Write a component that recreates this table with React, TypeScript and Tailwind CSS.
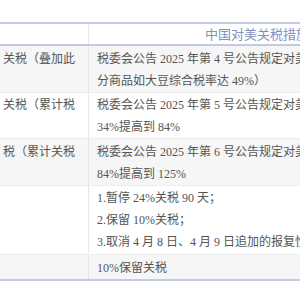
const font = {
  fontFamily: '"Liberation Serif", "Noto Sans CJK SC", serif',
};

type Row = { label: string; lines: string[]; gray: boolean; extra?: boolean };

const rows: Row[] = [
  {
    label: "关税（叠加此",
    lines: ["税委会公告 2025 年第 4 号公告规定对美国", "分商品如大豆综合税率达 49%）"],
    gray: true,
  },
  {
    label: "关税（累计税",
    lines: ["税委会公告 2025 年第 5 号公告规定对美国", "34%提高到 84%"],
    gray: false,
  },
  {
    label: "税（累计关税",
    lines: ["税委会公告 2025 年第 6 号公告规定对美国", "84%提高到 125%"],
    gray: true,
  },
  {
    label: "",
    lines: [
      "1.暂停 24%关税 90 天；",
      "2.保留 10%关税；",
      "3.取消 4 月 8 日、4 月 9 日追加的报复性关税",
    ],
    gray: false,
    extra: true,
  },
  { label: "", lines: ["10%保留关税"], gray: true },
];

export default function App() {
  return (
    <div className="w-[300px] h-[300px] bg-white overflow-hidden" style={font}>
      <div className="mt-[22px] border-t-2 border-b-2 border-[#c3cbe0] text-[12px] text-[#555]">
        <div className="flex h-[22px] border-b-2 border-[#c3cbe0] bg-white">
          <div className="w-[89px] shrink-0 border-r border-[#e6e6e6]" />
          <div className="flex-1 pl-[116px] leading-[22px] whitespace-nowrap overflow-hidden text-[#7f90c2] text-[13px]">
            中国对美关税措施一览
          </div>
        </div>
        {rows.map((r, i) => (
          <div
            key={i}
            className={`flex ${i > 0 ? "border-t border-[#ececec]" : ""} ${
              r.gray ? "bg-[#f6f6f6]" : "bg-white"
            } ${r.extra ? "pb-[1px]" : ""}`}
          >
            <div className="w-[89px] shrink-0 border-r border-[#e6e6e6] pl-[3px] pt-[1.5px] leading-[22px] whitespace-nowrap overflow-hidden">
              {r.label}
            </div>
            <div className="flex-1 pl-[8px] pt-[1.5px] leading-[22px] whitespace-nowrap overflow-hidden">
              {r.lines.map((l, j) => (
                <div key={j}>{l}</div>
              ))}
            </div>
          </div>
        ))}
      </div>
    </div>
  );
}
